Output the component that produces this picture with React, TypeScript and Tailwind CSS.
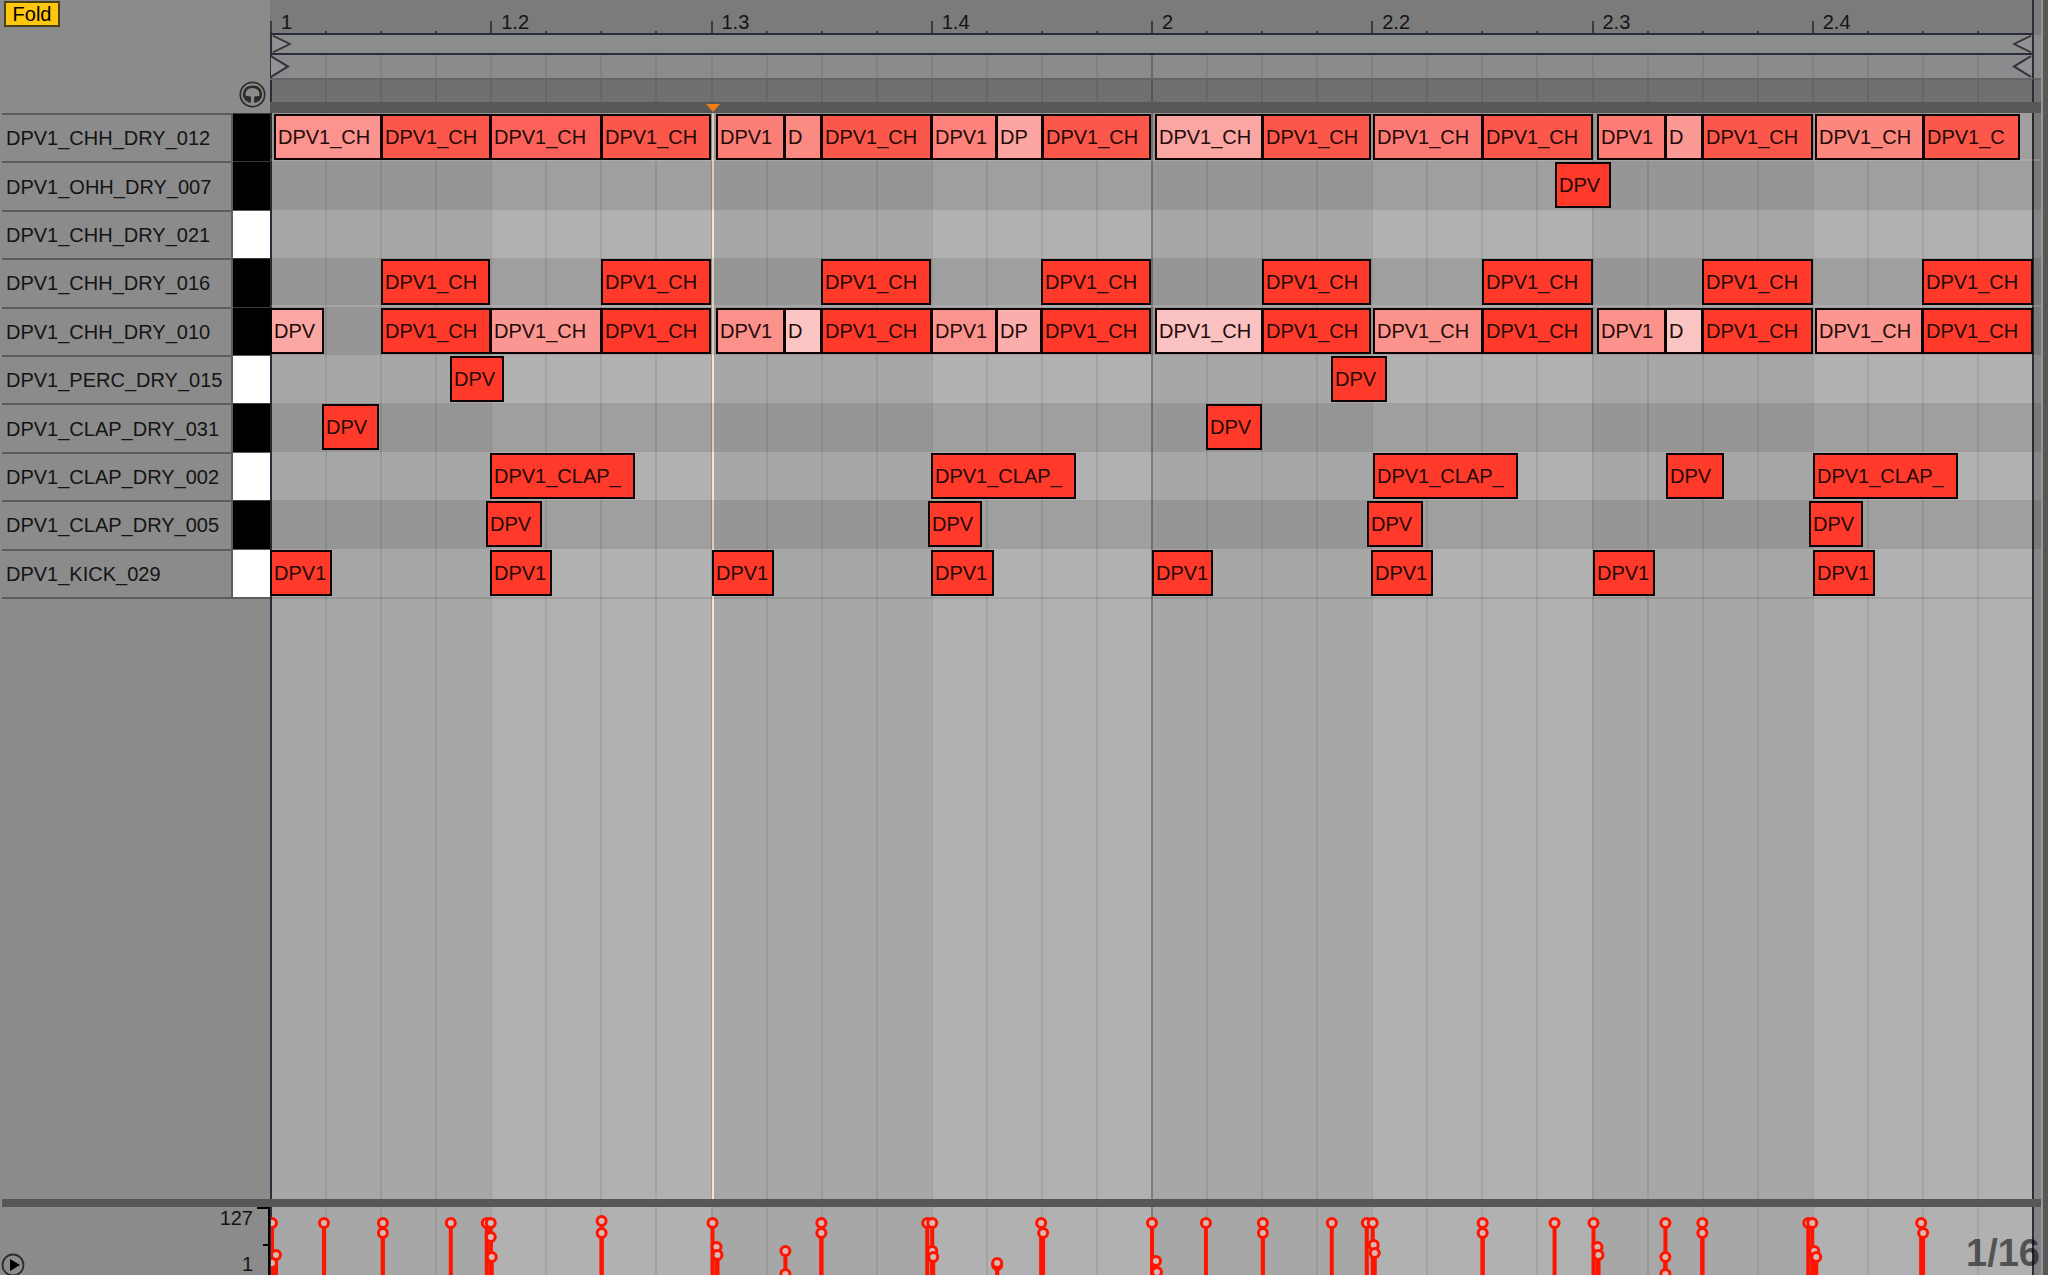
import type { ReactNode } from "react";

const ORIGIN = 271;
const SPAN = 1763;
const at = (x: number) => `${((x - ORIGIN) / SPAN) * 100}%`;
const len = (w: number) => `${(w / SPAN) * 100}%`;

const RED = "#ff3a2a";
const WARM = "#fb584b";

type Note = [start: number, end: number, label: string, color?: string];
type Lane = { name: string; black: boolean; split?: boolean; notes: Note[] };

const CH = "DPV1_CH";

const lanes: Lane[] = [
  {
    name: "DPV1_CHH_DRY_012",
    black: true,
    split: true,
    notes: [
      [274, 382, CH, "#fb948f"],
      [381, 491, CH, WARM],
      [490, 602, CH, "#fc625a"],
      [601, 711, CH, WARM],
      [716, 785, "DPV1", "#fc7f77"],
      [784, 822, "D", "#fb8a82"],
      [821, 932, CH, WARM],
      [931, 997, "DPV1", "#fc827b"],
      [996, 1043, "DP", "#fba5a2"],
      [1042, 1151, CH, WARM],
      [1155, 1263, CH, "#faa7a4"],
      [1262, 1371, CH, WARM],
      [1373, 1483, CH, "#fb7a73"],
      [1482, 1593, CH, WARM],
      [1597, 1666, "DPV1", "#fc7d76"],
      [1665, 1703, "D", "#fb9a95"],
      [1702, 1813, CH, WARM],
      [1815, 1924, CH, "#fb877f"],
      [1923, 2020, "DPV1_C", WARM],
    ],
  },
  { name: "DPV1_OHH_DRY_007", black: true, notes: [[1555, 1611, "DPV"]] },
  { name: "DPV1_CHH_DRY_021", black: false, notes: [] },
  {
    name: "DPV1_CHH_DRY_016",
    black: true,
    split: true,
    notes: [
      [381, 490, CH],
      [601, 711, CH],
      [821, 931, CH],
      [1041, 1151, CH],
      [1262, 1371, CH],
      [1482, 1593, CH],
      [1702, 1813, CH],
      [1922, 2033, CH],
    ],
  },
  {
    name: "DPV1_CHH_DRY_010",
    black: true,
    notes: [
      [270, 324, "DPV", "#fba8a5"],
      [381, 491, CH],
      [490, 602, CH, "#fa9792"],
      [601, 711, CH],
      [716, 785, "DPV1", "#fb918b"],
      [784, 822, "D", "#fac5c3"],
      [821, 932, CH],
      [931, 997, "DPV1", "#fb948f"],
      [996, 1042, "DP", "#fbaeac"],
      [1041, 1151, CH],
      [1155, 1263, CH, "#fac2c1"],
      [1262, 1371, CH],
      [1373, 1483, CH, "#fb938d"],
      [1482, 1593, CH],
      [1597, 1666, "DPV1", "#fb928c"],
      [1665, 1703, "D", "#fac5c3"],
      [1702, 1813, CH],
      [1815, 1923, CH, "#fb9690"],
      [1922, 2033, CH],
    ],
  },
  { name: "DPV1_PERC_DRY_015", black: false, notes: [[450, 504, "DPV"], [1331, 1387, "DPV"]] },
  { name: "DPV1_CLAP_DRY_031", black: true, notes: [[322, 379, "DPV"], [1206, 1262, "DPV"]] },
  {
    name: "DPV1_CLAP_DRY_002",
    black: false,
    notes: [
      [490, 635, "DPV1_CLAP_"],
      [931, 1076, "DPV1_CLAP_"],
      [1373, 1518, "DPV1_CLAP_"],
      [1666, 1724, "DPV"],
      [1813, 1958, "DPV1_CLAP_"],
    ],
  },
  {
    name: "DPV1_CLAP_DRY_005",
    black: true,
    notes: [
      [486, 542, "DPV"],
      [928, 982, "DPV"],
      [1367, 1423, "DPV"],
      [1809, 1863, "DPV"],
    ],
  },
  {
    name: "DPV1_KICK_029",
    black: false,
    notes: [
      [270, 332, "DPV1"],
      [490, 552, "DPV1"],
      [712, 774, "DPV1"],
      [931, 994, "DPV1"],
      [1152, 1213, "DPV1"],
      [1371, 1433, "DPV1"],
      [1593, 1655, "DPV1"],
      [1813, 1875, "DPV1"],
    ],
  },
];

const beats = ["1", "1.2", "1.3", "1.4", "2", "2.2", "2.3", "2.4"];

/* Velocity markers: time and height of each stem's head. */
const velocities: [number, number][] = [
  [272, 16], [276, 48], [272, 56], [324, 16], [383, 16], [383, 26], [451, 16],
  [487, 16], [491, 16], [491, 30], [492, 50], [602, 14], [602, 26],
  [713, 16], [717, 40], [718, 48], [786, 44], [786, 67],
  [822, 16], [822, 26], [928, 16], [933, 16], [933, 44], [934, 50],
  [998, 58], [998, 56], [1042, 16], [1044, 26],
  [1153, 16], [1157, 54], [1158, 65], [1207, 16], [1264, 16], [1264, 26],
  [1333, 16], [1368, 16], [1374, 16], [1375, 38], [1376, 46],
  [1484, 16], [1484, 26], [1556, 16], [1595, 16], [1599, 40], [1600, 48],
  [1667, 16], [1667, 50], [1667, 67], [1704, 16], [1704, 26],
  [1810, 16], [1814, 16], [1816, 44], [1818, 50], [1923, 16], [1925, 26],
];

function gridLine(beat: string, step: number) {
  if (step === 0 && beat === "1") return "border-[#2b2d3a]";
  if (step === 0 && beat === "2") return "border-black/25";
  return "border-black/8";
}

function BeatGrid() {
  return (
    <div className="absolute inset-0 flex" aria-hidden="true">
      {beats.map((b, i) => (
        <div key={b} className={`flex flex-1 ${i % 2 ? "bg-[#b1b1b1]" : "bg-[#a7a7a7]"}`}>
          {[0, 1, 2, 3].map((s) => (
            <div key={s} className={`flex-1 border-l-2 ${gridLine(b, s)}`} />
          ))}
        </div>
      ))}
    </div>
  );
}

function StripLines() {
  return (
    <div className="flex h-full" aria-hidden="true">
      {beats.map((b) => (
        <div key={b} className="flex flex-1">
          {[0, 1, 2, 3].map((s) => (
            <div key={s} className={`flex-1 border-l-2 ${gridLine(b, s)}`} />
          ))}
        </div>
      ))}
    </div>
  );
}

function Edge({ className }: { className: string }) {
  return <div className={`w-[7px] shrink-0 ${className}`} />;
}

function LoopFlag({ flip }: { flip?: boolean }) {
  return (
    <svg
      viewBox="0 0 20 22"
      preserveAspectRatio="none"
      className={`absolute inset-y-0 h-full w-5 ${flip ? "right-0 -scale-x-100" : "left-0"}`}
      aria-hidden="true"
    >
      <path d="M1 1 L18 11 L1 21" fill="#939395" stroke="#33333c" strokeWidth="2" />
    </svg>
  );
}

function Side({ children, className = "" }: { children?: ReactNode; className?: string }) {
  return <div className={`w-[270px] shrink-0 ${className}`}>{children}</div>;
}

export default function App() {
  return (
    <div className="flex h-screen min-h-[760px] overflow-hidden bg-[#8b8b8b] font-['Liberation_Sans',Arial,sans-serif] text-xl text-[#141414]">
      <main className="flex min-w-0 flex-1 flex-col">
        <header className="flex h-[113px] shrink-0">
          <Side className="relative">
            <button
              type="button"
              className="mt-px ml-1 flex h-[26px] w-14 items-center justify-center border-2 border-[#4a4214] bg-[#ffc60e] leading-5 text-black"
            >
              Fold
            </button>
            <button type="button" aria-label="Preview" className="absolute right-1 bottom-[5px] size-[27px]">
              <svg viewBox="0 0 27 27" className="size-full">
                <circle cx="13.5" cy="13.5" r="12.2" fill="none" stroke="#2c2c2c" strokeWidth="1.7" />
                <path
                  d="M8.6 19.6 C2.6 15 5 5.8 13.5 5.8 C22 5.8 24.4 15 18.4 19.6"
                  fill="none"
                  stroke="#2c2c2c"
                  strokeWidth="2.6"
                />
                <path d="M7 15 L11.9 15.6 V21.8 L9.4 21.4 L6.6 18.6 Z M20 15 L15.1 15.6 V21.8 L17.6 21.4 L20.4 18.6 Z" fill="#2c2c2c" />
              </svg>
            </button>
          </Side>
          <div className="flex min-w-0 flex-1 flex-col">
            <div className="flex h-[35px]">
              <div className="flex flex-1 border-r-2 border-b-2 border-[#2b2d3a] bg-[#7b7b7b] bg-clip-padding">
                {beats.map((b) => (
                  <div key={b} className="relative flex flex-1 items-end">
                    <span className="absolute bottom-0 left-[11px] leading-[22px]">{b}</span>
                    <i className="h-3 flex-1 border-l-2 border-[#3a3a40]" />
                    <i className="h-[2px] flex-1 border-l-2 border-[#3a3a40]" />
                    <i className="h-[2px] flex-1 border-l-2 border-[#3a3a40]" />
                    <i className="h-[2px] flex-1 border-l-2 border-[#3a3a40]" />
                  </div>
                ))}
              </div>
              <Edge className="bg-[#7b7b7b]" />
            </div>
            <div className="flex h-5">
              <div className="relative flex-1 border-x-2 border-b-2 border-[#2b2d3a] bg-[#8b8d8a]">
                <LoopFlag />
                <LoopFlag flip />
              </div>
              <Edge className="bg-[#8a8a8a]" />
            </div>
            <div className="flex h-[23px]">
              <div className="relative flex-1 border-r-2 border-[#2b2d3a] bg-[#8b8b8d]">
                <StripLines />
                <LoopFlag />
                <LoopFlag flip />
              </div>
              <Edge className="bg-[#8a8a8a]" />
            </div>
            <div className="flex h-6">
              <div className="flex-1 border-t-2 border-r-2 border-t-[#646464] border-r-[#2b2d3a] bg-[#707070]">
                <StripLines />
              </div>
              <Edge className="border-t-2 border-[#646464] bg-[#707070]" />
            </div>
            <div className="flex-1 bg-[#575757]" />
          </div>
        </header>

        <section className="relative flex flex-1 flex-col" aria-label="Note editor">
          <div className="absolute inset-y-0 right-0 left-[270px] flex">
            <div className="relative flex-1 border-r-2 border-[#2b2d3a]">
              <BeatGrid />
            </div>
            <Edge className="bg-[#868686]" />
          </div>

          <div className="pointer-events-none absolute inset-y-0 right-[7px] left-[271px]">
            <div className="absolute inset-y-0 w-[2px] bg-[#fbe3cf]" style={{ left: at(712) }} />
            <svg
              viewBox="0 0 14 8"
              className="absolute -top-[9px] h-2 w-3.5 -translate-x-1.5"
              style={{ left: at(712) }}
              aria-hidden="true"
            >
              <path d="M0 0 H14 L7 8 Z" fill="#f57c14" />
            </svg>
          </div>

          <div className="relative grid h-[484px] grid-rows-10">
            {lanes.map((lane) => (
              <div key={lane.name} className="flex min-h-0">
                <Side className="flex">
                  <span className="ml-[2px] flex flex-1 items-center border-t-2 border-r-2 border-[#5c5c5c] pl-1 whitespace-nowrap">
                    {lane.name}
                  </span>
                  <button
                    type="button"
                    aria-label={`Play ${lane.name}`}
                    className={`w-[37px] border-t ${
                      lane.black ? "border-[#3c3c3c] bg-black" : "border-[#5c5c5c] bg-white"
                    }`}
                  />
                </Side>
                <div
                  className={`min-w-0 flex-1 pr-[7px] pl-px ${lane.black ? "bg-black/10" : ""} ${
                    lane.split ? "border-b-2 border-white/15" : ""
                  }`}
                >
                  <div className="relative h-full">
                    {lane.notes.map(([start, end, label, color = RED]) => (
                      <button
                        type="button"
                        key={start}
                        className="absolute top-px flex h-[46px] items-center overflow-hidden border-2 border-[#0d0303] pl-[2px] whitespace-nowrap text-[#240a08]"
                        style={{ left: at(start), width: len(end - start), backgroundColor: color }}
                      >
                        {label}
                      </button>
                    ))}
                  </div>
                </div>
              </div>
            ))}
          </div>
          <div className="relative flex">
            <div className="ml-[2px] h-[2px] w-[268px] bg-[#5c5c5c]" />
            <div className="mr-[7px] h-[2px] flex-1 bg-black/10" />
          </div>
        </section>

        <div className="ml-[2px] h-[8px] shrink-0 bg-[#575757]" />

        <footer className="flex h-[68px] shrink-0">
          <Side className="flex">
            <button type="button" aria-label="Play" className="mt-auto -mb-[2px] ml-px size-6">
              <svg viewBox="0 0 24 24" className="size-full">
                <circle cx="12" cy="12" r="10.5" fill="none" stroke="#2c2c2c" strokeWidth="1.8" />
                <path d="M9 6 L19 12 L9 18 Z" fill="#000" />
              </svg>
            </button>
            <div className="ml-auto flex flex-col justify-between text-right leading-[22px]">
              <span>127</span>
              <span>1</span>
            </div>
            <div className="ml-1 flex w-[13px] flex-col border-t-2 border-r-2 border-black">
              <div className="mt-[35px] ml-auto h-[2px] w-[5px] bg-black" />
            </div>
          </Side>
          <div className="relative flex min-w-0 flex-1">
            <div className="relative flex-1 border-r-2 border-[#2b2d3a]">
              <BeatGrid />
              <div className="absolute inset-0 overflow-hidden pl-px">
                <svg className="h-full w-full" role="img" aria-label="Note velocities">
                  {velocities.map(([x, y], i) => (
                    <g key={i} stroke="#ff1400">
                      <line x1={at(x)} x2={at(x)} y1={y + 4} y2="68" strokeWidth="4" />
                      <circle cx={at(x)} cy={y} r="4.5" strokeWidth="3" fill="#d8b8b4" />
                    </g>
                  ))}
                </svg>
              </div>
            </div>
            <Edge className="bg-[#828282]" />
            <span className="absolute right-[1px] bottom-0 text-[38px] leading-[44px] font-bold text-black/55">
              1/16
            </span>
          </div>
        </footer>
      </main>
      <aside className="w-[7px] shrink-0 border-l-2 border-[#969696] bg-[#575757]" />
    </div>
  );
}
